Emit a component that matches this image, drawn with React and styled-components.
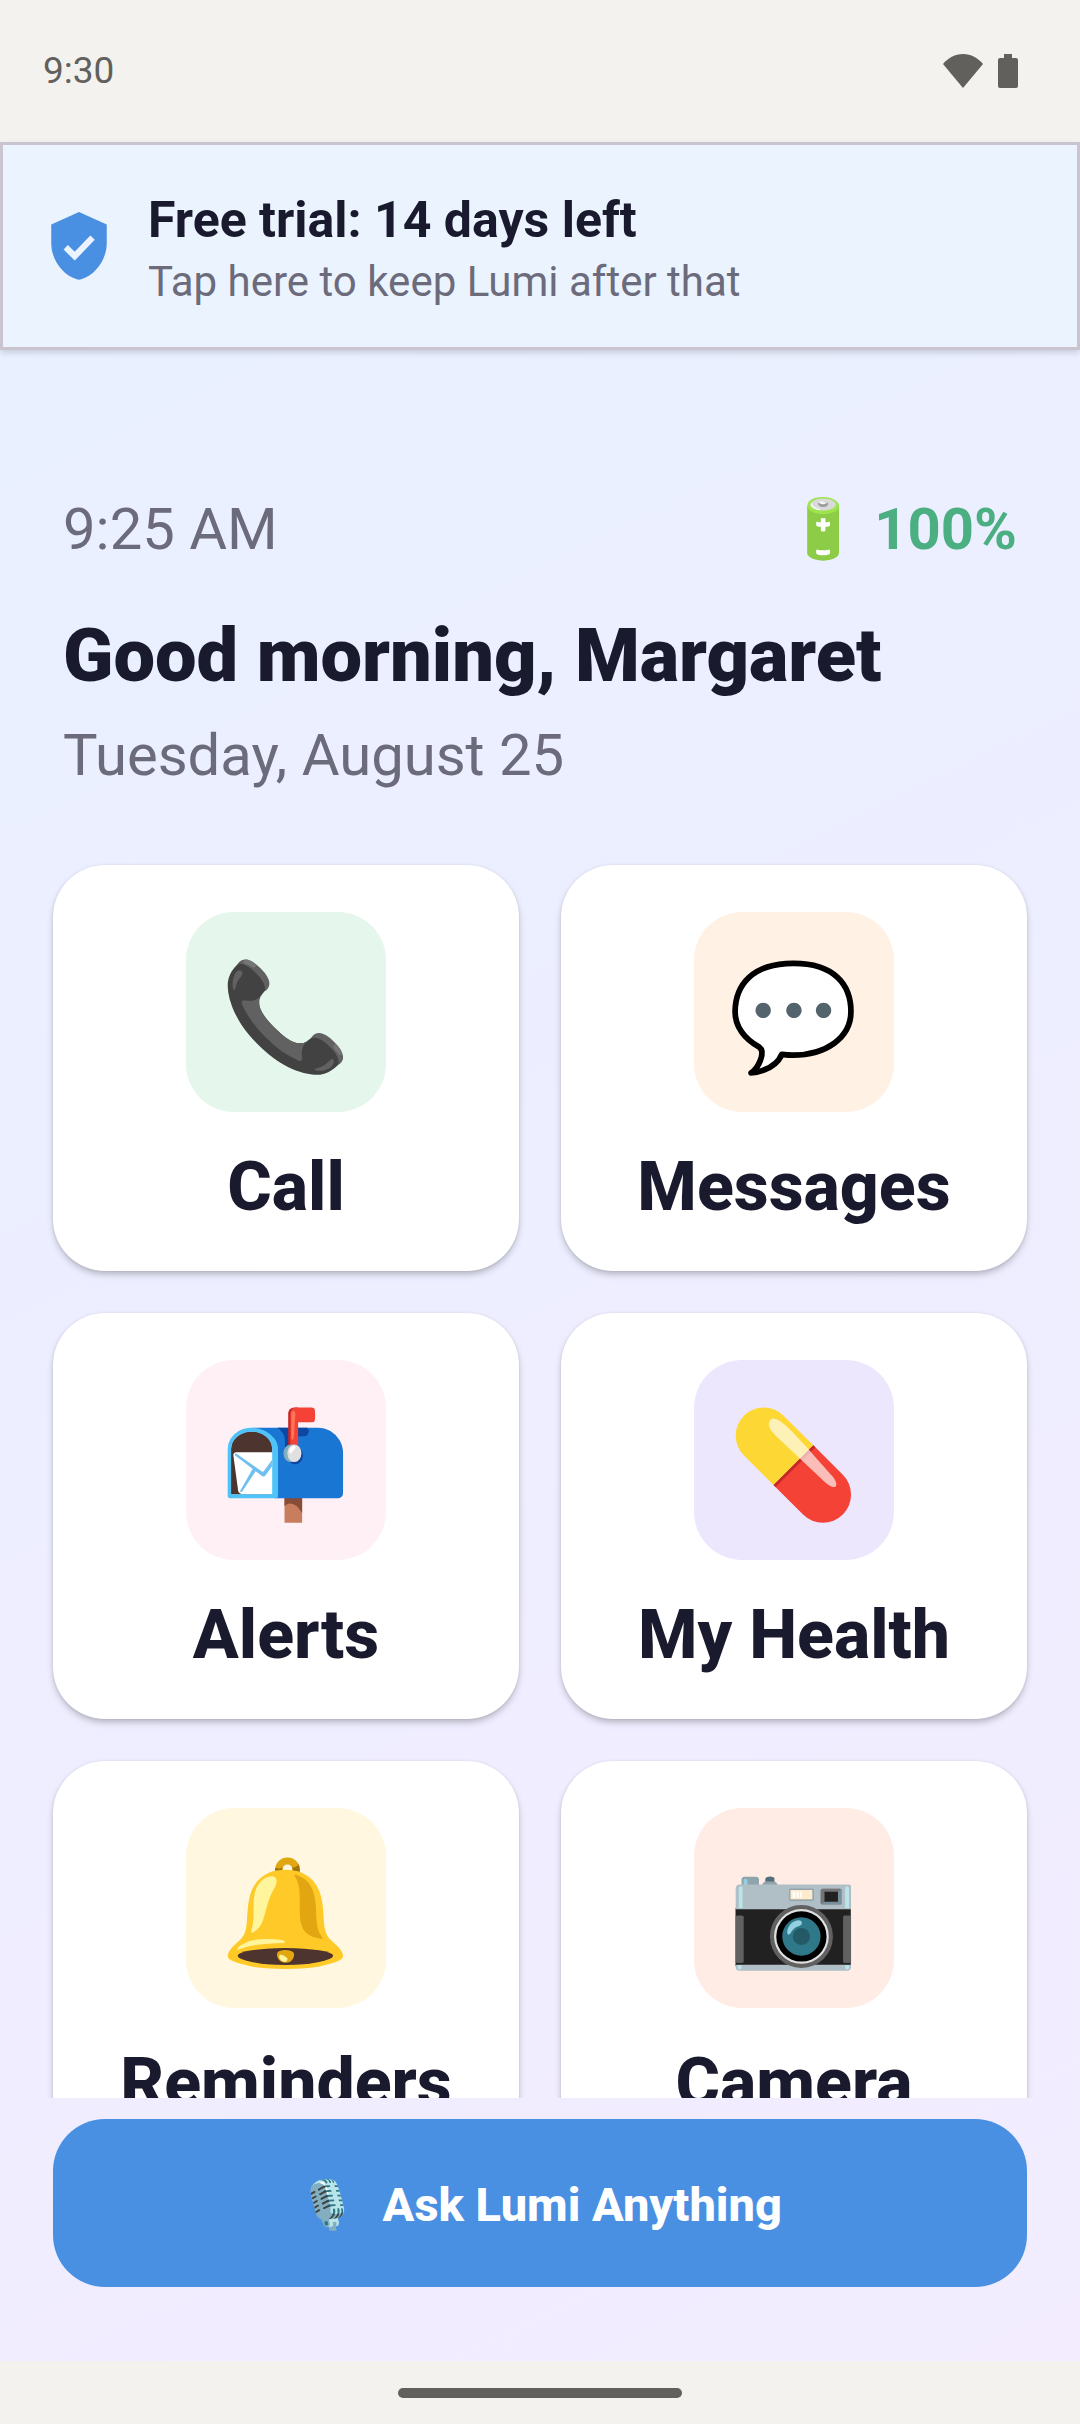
import React from "react"
import styled, { createGlobalStyle } from "styled-components"

const tiles = [
    { label: "Call", emoji: "📞", tint: "#e5f6ec" },
    { label: "Messages", emoji: "💬", tint: "#fff2e5" },
    { label: "Alerts", emoji: "📬", tint: "#fff0f5" },
    { label: "My Health", emoji: "💊", tint: "#ede7fe" },
    { label: "Reminders", emoji: "🔔", tint: "#fff7e0" },
    { label: "Camera", emoji: "📷", tint: "#ffece5" },
]

const App = () => (
    <Screen>
        <GlobalStyle />
        <StatusBar>
            <span>9:30</span>
            <StatusIcons>
                <svg width="40" height="34" viewBox="0 0 40 34" aria-hidden="true">
                    <path d="M20 34 0 10C5 4 12 0 20 0s15 4 20 10z" />
                </svg>
                <svg width="20" height="34" viewBox="0 0 20 34" aria-hidden="true">
                    <path d="M6 0h8v4h4a2 2 0 0 1 2 2v26a2 2 0 0 1-2 2H2a2 2 0 0 1-2-2V6a2 2 0 0 1 2-2h4z" />
                </svg>
            </StatusIcons>
        </StatusBar>
        <TrialBanner type="button">
            <svg width="74" height="74" viewBox="0 0 24 24" aria-hidden="true">
                <path fill="#4a90e2" d="M12 1 3 5v6c0 5.5 3.8 10.5 8.3 11.8q.7.3 1.4 0C17.2 21.5 21 16.5 21 11V5z" />
                <path fill="none" stroke="#ebf3ff" strokeWidth="2" d="m7.7 12.4 2.9 2.9 5.8-6" />
            </svg>
            <TrialText>
                <TrialTitle>Free trial: 14 days left</TrialTitle>
                <TrialHint>Tap here to keep Lumi after that</TrialHint>
            </TrialText>
        </TrialBanner>
        <Scroller>
            <Header>
                <InfoRow>
                    <span>9:25 AM</span>
                    <Battery>🔋 100%</Battery>
                </InfoRow>
                <Greeting>Good morning, Margaret</Greeting>
                <Today>Tuesday, August 25</Today>
            </Header>
            <Grid>
                {tiles.map(({ label, emoji, tint }) => (
                    <Tile key={label} type="button">
                        <TileIcon $tint={tint}>{emoji}</TileIcon>
                        <TileLabel>{label}</TileLabel>
                    </Tile>
                ))}
            </Grid>
        </Scroller>
        <AskButton type="button">
            <span>🎙️</span>
            Ask Lumi Anything
        </AskButton>
        <NavBar>
            <NavHandle />
        </NavBar>
    </Screen>
)

export default App

const GlobalStyle = createGlobalStyle`
    * {
        box-sizing: border-box;
    }

    body {
        margin: 0;
        font-family: Roboto, "Noto Color Emoji", sans-serif;
        color: #1a1a2e;
    }

    button {
        border: 0;
        font-family: inherit;
        color: inherit;
        cursor: pointer;
    }

    svg {
        display: block;
        flex: none;
    }
`

const Screen = styled.div`
    display: flex;
    flex-direction: column;
    height: 100vh;
    background: linear-gradient(154deg, #e8f1ff 0%, #edeeff 50%, #f3ecff 100%);
`

const StatusBar = styled.div`
    display: flex;
    justify-content: space-between;
    align-items: center;
    flex: none;
    height: 142px;
    padding: 0 62px 0 43px;
    background: #f3f2ee;
    color: #61605d;
    fill: #61605d;
    font-size: 37px;
    line-height: 44px;
`

const StatusIcons = styled.div`
    display: flex;
    gap: 15px;
`

const TrialBanner = styled.button`
    display: flex;
    align-items: center;
    flex: none;
    gap: 32px;
    height: 208px;
    padding: 0 39px;
    border: 3px solid #cac4d0;
    background: #ebf3ff;
    box-shadow: 0 3px 6px rgba(0, 0, 0, 0.14);
    text-align: left;
`

const TrialText = styled.span`
    padding-top: 10px;
`

const TrialTitle = styled.span`
    display: block;
    font-size: 50px;
    font-weight: 700;
    line-height: 62px;
`

const TrialHint = styled.span`
    display: block;
    color: #6b6b7b;
    font-size: 42px;
    line-height: 62px;
`

const Scroller = styled.main`
    flex: 1;
    min-height: 0;
    overflow-y: auto;
    scrollbar-width: none;
`

const Header = styled.header`
    padding: 145px 63px 0;
    color: #6b6b7b;
    font-size: 58px;
    line-height: 68px;
`

const InfoRow = styled.div`
    display: flex;
    justify-content: space-between;
    height: 68px;
`

const Battery = styled.strong`
    color: #4caf82;
    font-weight: 700;
`

const Greeting = styled.h1`
    margin: 49px 0 22px;
    color: #1a1a2e;
    font-size: 74px;
    font-weight: 900;
    line-height: 87px;
`

const Today = styled.p`
    margin: 0;
`

const Grid = styled.div`
    display: grid;
    grid-template-columns: 1fr 1fr;
    gap: 42px;
    padding: 76px 53px 42px;
`

const Tile = styled.button`
    display: flex;
    flex-direction: column;
    align-items: center;
    gap: 33px;
    padding: 47px 0 42px;
    border-radius: 52px;
    background: #fff;
    box-shadow: 0 4px 7px -1px rgba(0, 0, 0, 0.26), 0 0 3px rgba(0, 0, 0, 0.08);
`

const TileIcon = styled.span`
    display: flex;
    justify-content: center;
    align-items: center;
    width: 200px;
    height: 200px;
    padding-top: 10px;
    border-radius: 48px;
    background: ${props => props.$tint};
    font-size: 105px;
`

const TileLabel = styled.span`
    font-size: 68px;
    font-weight: 800;
    line-height: 84px;
`

const AskButton = styled.button`
    display: flex;
    justify-content: center;
    align-items: center;
    flex: none;
    gap: 26px;
    height: 168px;
    margin: 21px 53px 74px;
    padding-top: 3px;
    border-radius: 52px;
    background: #4a90e2;
    color: #fff;
    font-size: 47px;
    font-weight: 800;
`

const NavBar = styled.div`
    display: flex;
    justify-content: center;
    align-items: center;
    flex: none;
    height: 63px;
    background: #f3f2ee;
`

const NavHandle = styled.div`
    width: 284px;
    height: 10px;
    border-radius: 5px;
    background: #61605d;
`
